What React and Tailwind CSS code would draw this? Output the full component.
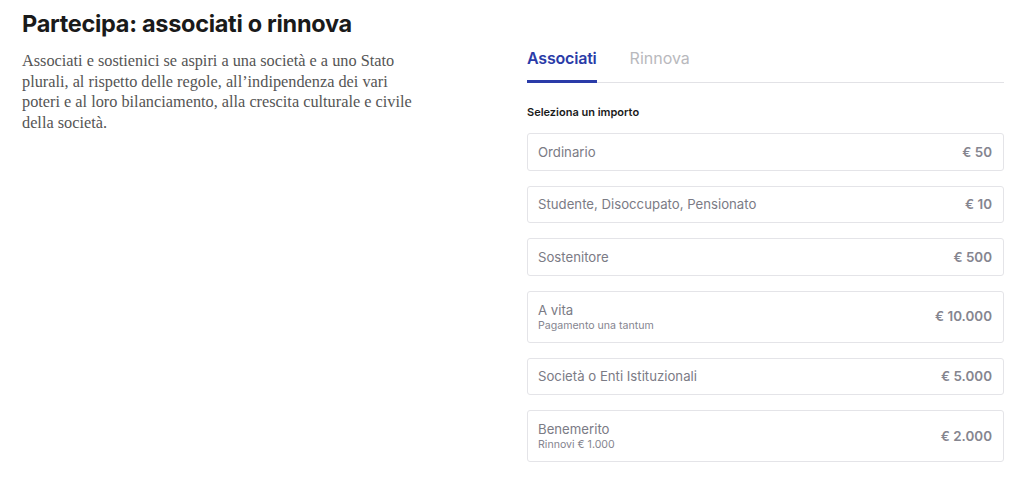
import React from "react";

const items = [
  { label: "Ordinario", price: "€ 50" },
  { label: "Studente, Disoccupato, Pensionato", price: "€ 10" },
  { label: "Sostenitore", price: "€ 500" },
  { label: "A vita", sub: "Pagamento una tantum", price: "€ 10.000" },
  { label: "Società o Enti Istituzionali", price: "€ 5.000" },
  { label: "Benemerito", sub: "Rinnovi € 1.000", price: "€ 2.000" },
];

export default function App() {
  return (
    <div className="w-[1024px] h-[480px] bg-white flex overflow-hidden">
      <div className="w-[527px] shrink-0 pl-[22px] pt-[9px]">
        <h1 className="font-['Inter',sans-serif] font-bold text-[23.5px] leading-[30px] tracking-[-0.3px] text-[#1a1a1a]">
          Partecipa: associati o rinnova
        </h1>
        <p className="mt-[12px] w-[402px] font-['Liberation_Serif',serif] text-[16.3px] leading-[20.6px] text-[#555]">
          Associati e sostienici se aspiri a una società e a uno Stato plurali, al rispetto delle regole, all’indipendenza dei vari poteri e al loro bilanciamento, alla crescita culturale e civile della società.
        </p>
      </div>
      <div className="w-[477px] shrink-0 pt-[46px] font-['Inter',sans-serif]">
        <div className="flex gap-[33px] border-b border-[#e2e2e6]">
          <div className="relative pb-[12px] text-[16px] leading-[24px] font-semibold text-[#2a3ba8] tracking-[-0.2px]">
            Associati
            <div className="absolute left-0 right-0 bottom-[-1px] h-[3px] bg-[#2a3ba8]" />
          </div>
          <div className="pb-[12px] text-[16px] leading-[24px] text-[#b9b9bd]">Rinnova</div>
        </div>
        <div className="mt-[22px] text-[11px] leading-[14px] font-semibold text-[#1a1a1a]">
          Seleziona un importo
        </div>
        <div className="mt-[14px] flex flex-col gap-[15px]">
          {items.map((it) => (
            <div
              key={it.label}
              className={`flex items-center justify-between border border-[#e4e4e8] rounded-[3px] pl-[10px] pr-[11px] ${it.sub ? "h-[52px]" : "h-[37.5px]"}`}
            >
              <div className="flex flex-col">
                <span className="text-[13.2px] leading-[18px] text-[#7b7b85]">{it.label}</span>
                {it.sub && (
                  <span className="text-[10.6px] leading-[14px] text-[#85858f]">{it.sub}</span>
                )}
              </div>
              <span className="text-[13.4px] font-semibold text-[#85858f]">{it.price}</span>
            </div>
          ))}
        </div>
      </div>
    </div>
  );
}
